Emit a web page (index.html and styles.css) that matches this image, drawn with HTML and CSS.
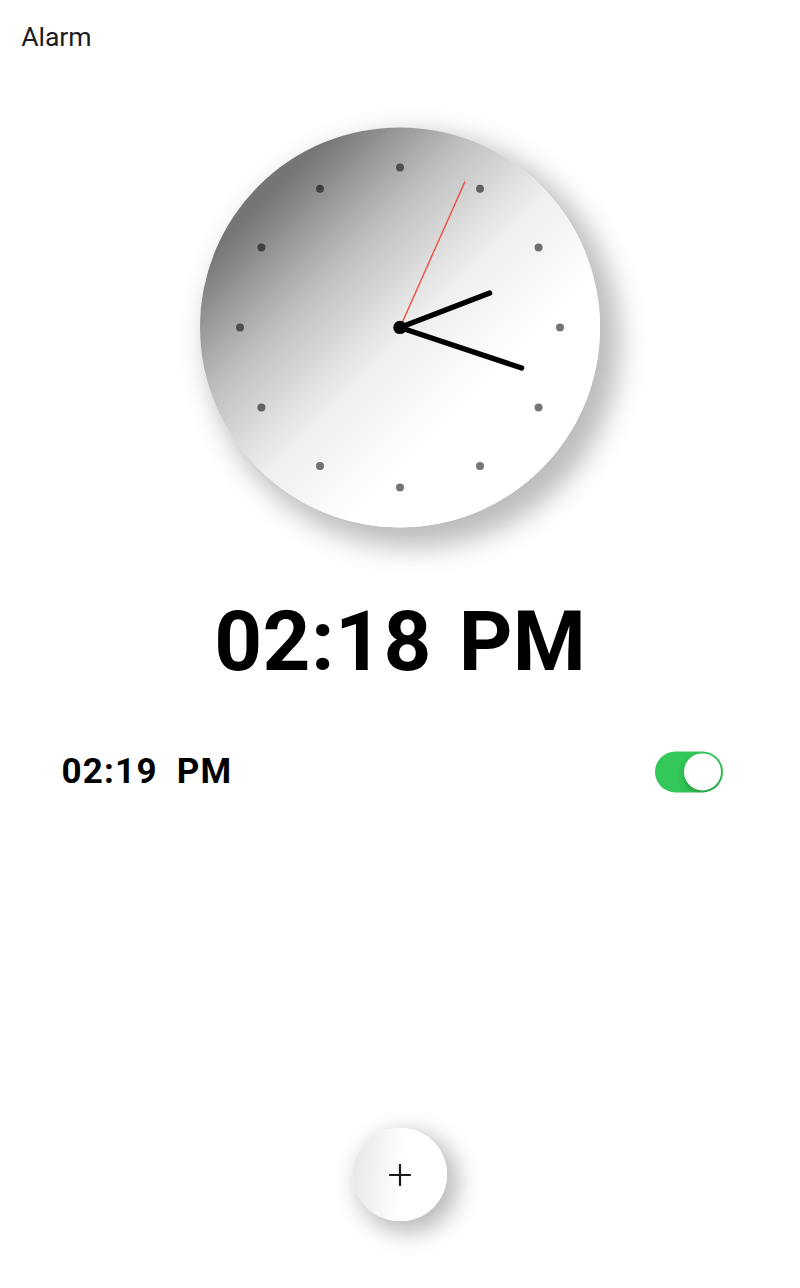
FILE: index.html
```html
<!DOCTYPE html>
<html lang="en">
<head>
<meta charset="utf-8">
<title>Alarm</title>
<link rel="stylesheet" href="styles.css">
</head>
<body>
<header class="bar"><h1 class="title">Alarm</h1></header>
<main class="content">
  <div class="clock">
    <svg class="face" viewBox="-200 -200 400 400">
      <g class="dots">
        <circle cx="0" cy="-160" r="4"/><circle cx="80" cy="-138.56" r="4"/><circle cx="138.56" cy="-80" r="4"/>
        <circle cx="160" cy="0" r="4"/><circle cx="138.56" cy="80" r="4"/><circle cx="80" cy="138.56" r="4"/>
        <circle cx="0" cy="160" r="4"/><circle cx="-80" cy="138.56" r="4"/><circle cx="-138.56" cy="80" r="4"/>
        <circle cx="-160" cy="0" r="4"/><circle cx="-138.56" cy="-80" r="4"/><circle cx="-80" cy="-138.56" r="4"/>
      </g>
      <path class="hand" d="M0 0L89.7-34.3M0 0L121.7 40.6"/>
      <path class="second" d="M0 0L65-146"/>
      <circle r="6.7"/>
    </svg>
  </div>
  <div class="now">02:18<span class="period">PM</span></div>
  <div class="alarm">
    <div class="time"><span>02:19</span><span>PM</span></div>
    <div class="switch"><span class="thumb"></span></div>
  </div>
</main>
<footer class="actions">
  <button class="add" aria-label="Add alarm">
    <svg class="plus" viewBox="0 0 22 22"><path d="M11 1V21M1 11H21"/></svg>
  </button>
</footer>
</body>
</html>
```
FILE: styles.css
```css
* { box-sizing: border-box; }
body {
  margin: 0;
  height: 1288px;
  display: flex;
  flex-direction: column;
  background: #fff;
  color: #000;
  font-family: Roboto, sans-serif;
  overflow: hidden;
}
.bar { height: 74px; padding: 0 21.3px; display: flex; align-items: center; }
.title { margin: 0; font-size: 26.6px; font-weight: 400; line-height: 34px; letter-spacing: -.1px; color: #1c1b1f; }
.content { flex: 1; display: flex; flex-direction: column; align-items: center; padding-top: 53px; }
.clock {
  width: 400px;
  height: 400px;
  border-radius: 50%;
  background: linear-gradient(135deg, #757575 17%, #bdbdbd 34%, #eee 51%, #fff 68%);
  box-shadow: 13.3px 13.3px 27px 6.7px #bdbdbd;
  transform: translateY(.4px);
}
.face { display: block; width: 400px; height: 400px; }
.dots { fill: rgba(0, 0, 0, .54); }
.hand { stroke: #000; stroke-width: 5.3; stroke-linecap: round; fill: none; }
.second { stroke: #f44336; stroke-width: 1.3; }
.now { margin-top: 64.5px; height: 100px; line-height: 100px; font-size: 83.5px; font-weight: 700; letter-spacing: .5px; white-space: nowrap; }
.period { margin-left: 27px; letter-spacing: 0; }
.alarm { width: 100%; margin-top: 57px; padding: 0 77px 0 61.5px; height: 46px; display: flex; align-items: center; justify-content: space-between; }
.time { display: flex; gap: 19px; font-size: 35px; font-weight: 700; letter-spacing: 1.2px; line-height: 46px; }
.switch { width: 68px; height: 41.3px; padding: 2px; border-radius: 21px; background: #34c759; display: flex; justify-content: flex-end; overflow: hidden; transform: translateY(.4px); }
.thumb { width: 37.3px; height: 37.3px; border-radius: 50%; background: #fff; box-shadow: 0 4px 10px rgba(0, 0, 0, .15), 0 4px 2px rgba(0, 0, 0, .06); }
.actions { display: flex; justify-content: center; padding-bottom: 67px; }
.add {
  width: 93.3px;
  height: 93.3px;
  padding: 0;
  border: 0;
  border-radius: 50%;
  display: flex;
  align-items: center;
  justify-content: center;
  background: linear-gradient(95deg, #e8e8e8 4%, #fff 52%);
  box-shadow: 8px 8px 22px 4px #bdbdbd;
}
.plus { width: 22px; height: 22px; margin-top: 1px; stroke: #1c1b1f; stroke-width: 2.2; stroke-linecap: round; fill: none; }
```
